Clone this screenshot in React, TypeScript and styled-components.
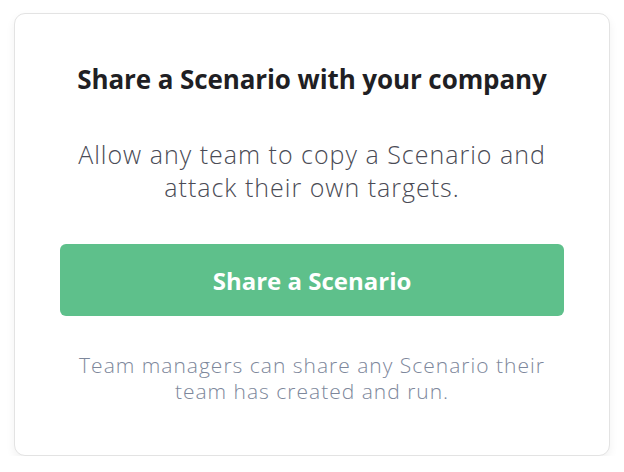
import React from "react";
import styled, { createGlobalStyle } from "styled-components";

const Global = createGlobalStyle`
  html, body { margin: 0; padding: 0; background: #ffffff; }
  body { font-family: "Open Sans", "Noto Sans", sans-serif; -webkit-font-smoothing: antialiased; }
`;

const Page = styled.div`
  padding: 13px 15px 0 14px;
`;

const Card = styled.div`
  width: 596px;
  height: 443px;
  box-sizing: border-box;
  background: #fff;
  border: 1px solid #e3e3e3;
  border-radius: 11px;
  box-shadow: 0 4px 10px rgba(0, 0, 0, 0.06);
  padding: 49px 40px 0 40px;
  display: flex;
  flex-direction: column;
  align-items: center;
  text-align: center;
`;

const Title = styled.h1`
  margin: 0;
  font-size: 26px;
  font-weight: 700;
  color: #1f1f24;
  line-height: 32px;
  letter-spacing: -0.1px;
`;

const Body = styled.p`
  margin: 43px 0 0;
  font-size: 25px;
  line-height: 33px;
  font-weight: 300;
  color: #4a4b55;
  max-width: 490px;
  letter-spacing: 1px;
`;

const Button = styled.button`
  margin-top: 40px;
  width: 504px;
  height: 72px;
  flex-shrink: 0;
  border: none;
  border-radius: 6px;
  background: #5ec08b;
  color: #fff;
  font-family: inherit;
  font-size: 24px;
  font-weight: 700;
  cursor: pointer;
`;

const Note = styled.p`
  margin: 36px 0 0;
  font-size: 21px;
  line-height: 26px;
  font-weight: 300;
  color: #7d879b;
  max-width: 490px;
  letter-spacing: 1px;
`;

export default function App() {
  return (
    <>
      <Global />
      <Page>
        <Card>
          <Title>Share a Scenario with your company</Title>
          <Body>Allow any team to copy a Scenario and attack their own targets.</Body>
          <Button>Share a Scenario</Button>
          <Note>Team managers can share any Scenario their team has created and run.</Note>
        </Card>
      </Page>
    </>
  );
}
